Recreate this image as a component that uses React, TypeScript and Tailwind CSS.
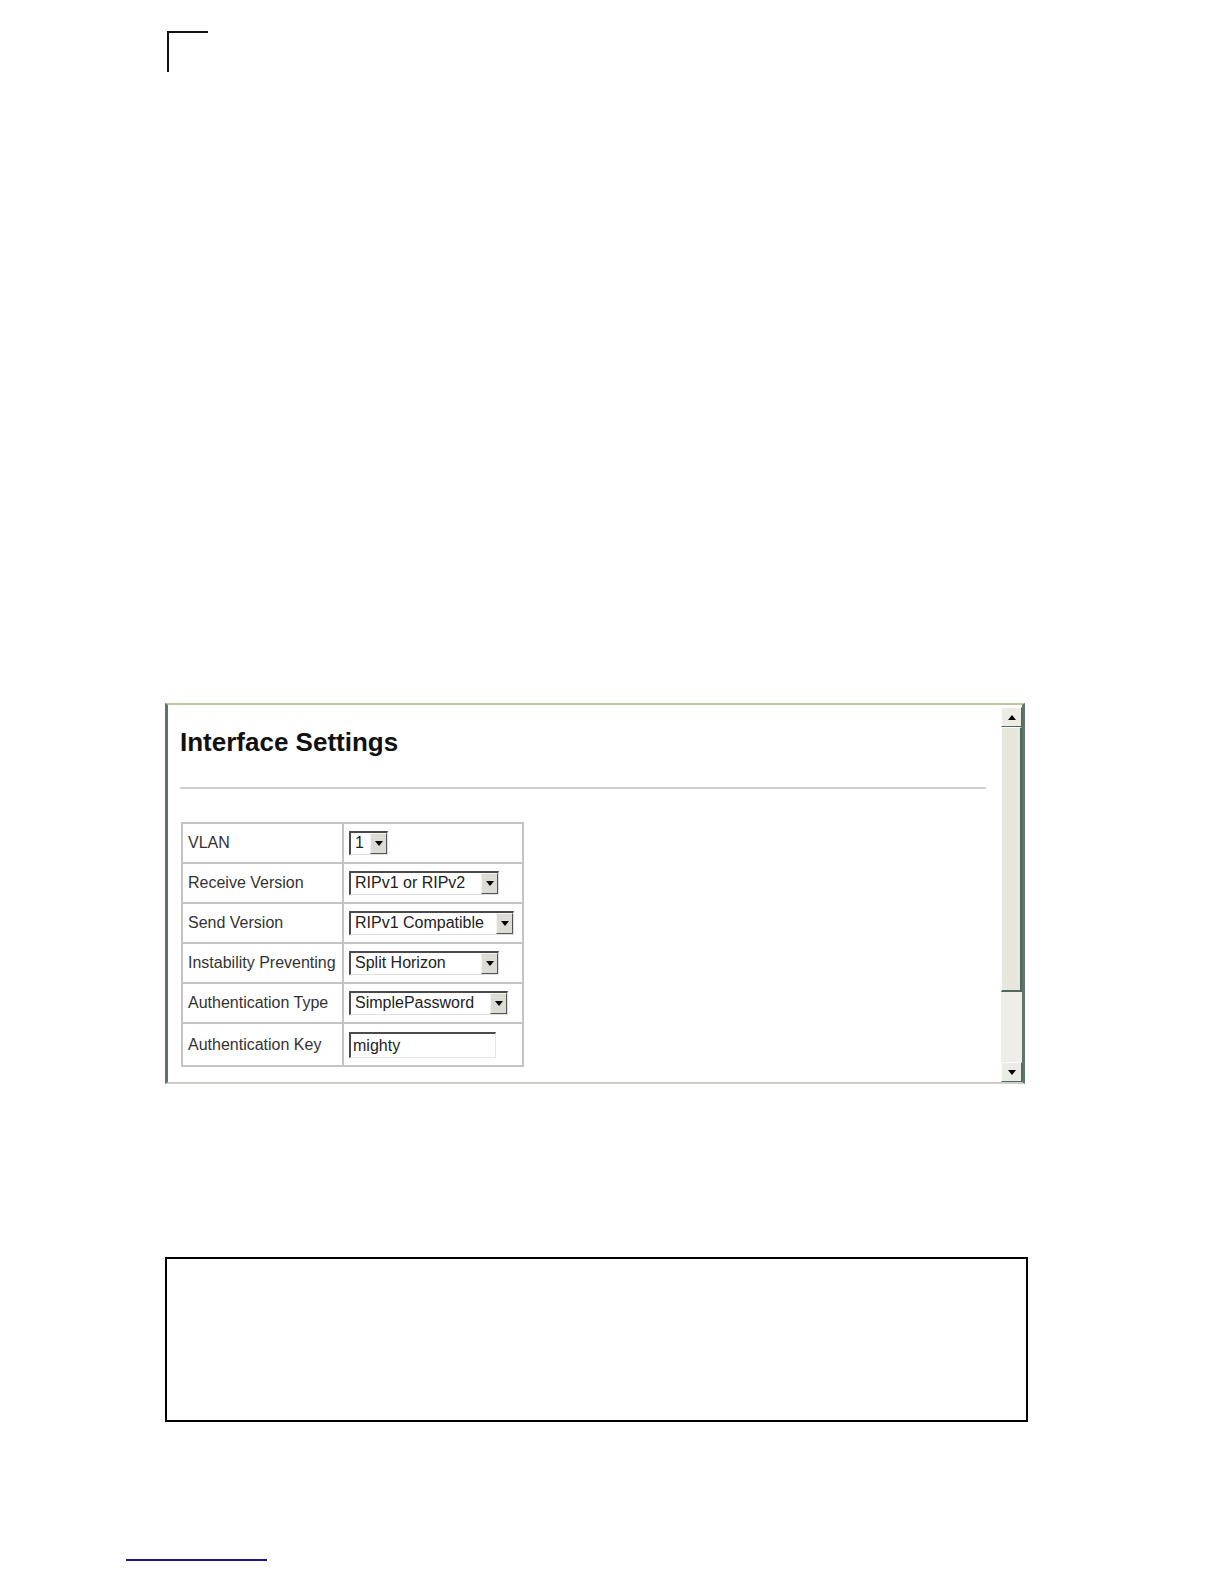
import React from 'react';

const rows: { label: string; value: string; width: string; kind: 'select' | 'input' }[] = [
  { label: 'VLAN', value: '1', width: 'w-[39px]', kind: 'select' },
  { label: 'Receive Version', value: 'RIPv1 or RIPv2', width: 'w-[150px]', kind: 'select' },
  { label: 'Send Version', value: 'RIPv1 Compatible', width: 'w-[165px]', kind: 'select' },
  { label: 'Instability Preventing', value: 'Split Horizon', width: 'w-[150px]', kind: 'select' },
  { label: 'Authentication Type', value: 'SimplePassword', width: 'w-[159px]', kind: 'select' },
  { label: 'Authentication Key', value: 'mighty', width: 'w-[147px]', kind: 'input' },
];

function Arrow({ up }: { up?: boolean }) {
  return (
    <svg width="8" height="5" viewBox="0 0 8 5">
      <path d={up ? 'M0 5 L4 0 L8 5 Z' : 'M0 0 L8 0 L4 5 Z'} fill="#000" />
    </svg>
  );
}

function Select({ value, width }: { value: string; width: string }) {
  return (
    <div className={`flex h-[24px] ${width} border-t-2 border-l-2 border-t-[#4a4a4a] border-l-[#4a4a4a] border-b border-r border-b-[#e0e0e0] border-r-[#e0e0e0] bg-white`}>
      <span className="flex-1 pl-[4px] text-[16px] leading-[20px] text-[#222] whitespace-nowrap overflow-hidden">{value}</span>
      <span className="flex w-[17px] items-center justify-center border border-t-[#f4f4f4] border-l-[#f4f4f4] border-b-[#555] border-r-[#555] bg-[#dcdcd4]">
        <Arrow />
      </span>
    </div>
  );
}

function TextInput({ value, width }: { value: string; width: string }) {
  return (
    <div className={`h-[26px] ${width} border-t-2 border-l-2 border-t-[#4a4a4a] border-l-[#4a4a4a] border-b border-r border-b-[#e4e4e4] border-r-[#e4e4e4] bg-white`}>
      <span className="pl-[2px] text-[16px] leading-[22px] text-[#222]">{value}</span>
    </div>
  );
}

function Scrollbar() {
  return (
    <div className="flex w-[21px] flex-col bg-[#eeeee8] ml-[12px]">
      <div className="flex h-[20px] items-center justify-center border border-t-[#fafafa] border-l-[#fafafa] border-b-[#4e6a5e] border-r-[#4e6a5e] bg-[#ecece4]">
        <Arrow up />
      </div>
      <div className="h-[265px] border border-t-[#fafafa] border-l-[#fafafa] border-b-2 border-r-2 border-b-[#4e6a5e] border-r-[#4e6a5e] bg-[#e6e6dc]" />
      <div className="flex-1" />
      <div className="flex h-[20px] items-center justify-center border border-t-[#fafafa] border-l-[#fafafa] border-b-[#4e6a5e] border-r-[#4e6a5e] bg-[#ecece4]">
        <Arrow />
      </div>
    </div>
  );
}

export default function App() {
  return (
    <div className="w-[1224px] h-[1584px] bg-white overflow-hidden" style={{ fontFamily: '"Liberation Sans", Arial, sans-serif' }}>
      <div className="pt-[31px] pl-[167px]">
        <div className="h-[41px] w-[41px] border-l-2 border-t-2 border-[#111]" />
      </div>

      <div className="mt-[631px] ml-[165px] flex h-[381px] w-[860px] border-t-2 border-t-[#b8c8a0] border-l-[3px] border-l-[#5c7668] border-b-2 border-b-[#c8d0c8] border-r-[3px] border-r-[#5c7668] pt-[2px]">
        <div className="flex-1 pl-[12px] pr-0">
          <h1 className="mt-[21px] text-[26px] font-bold leading-[28px] text-[#111]">Interface Settings</h1>
          <div className="mt-[31px] h-[2px] w-[806px] bg-[#cfcfcf]" />
          <table className="mt-[33px] ml-[1px] border-collapse border-2 border-[#b0b0b0]">
            <tbody>
              {rows.map((r) => (
                <tr key={r.label} className={r.kind === 'input' ? 'h-[43px]' : 'h-[40px]'}>
                  <td className="w-[161px] border-2 border-[#c4c4c4] pl-[5px] text-[16px] text-[#333] whitespace-nowrap">{r.label}</td>
                  <td className="w-[180px] border-2 border-[#c4c4c4] pl-[5px]">
                    {r.kind === 'select' ? <Select value={r.value} width={r.width} /> : <TextInput value={r.value} width={r.width} />}
                  </td>
                </tr>
              ))}
            </tbody>
          </table>
        </div>
        <Scrollbar />
      </div>

      <div className="mt-[173px] ml-[165px] h-[165px] w-[863px] border-2 border-black" />

      <div className="mt-[137px] ml-[126px] h-[2px] w-[141px] bg-[#1a1a8c]" />
    </div>
  );
}
